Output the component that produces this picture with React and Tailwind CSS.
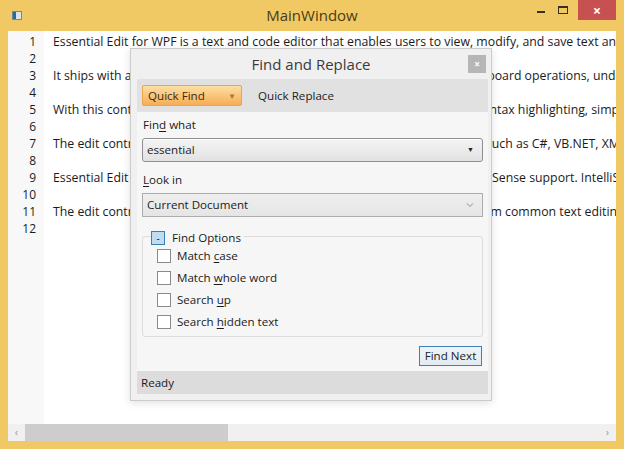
import React from 'react';

const lines = [
  'Essential Edit for WPF is a text and code editor that enables users to view, modify, and save text and code files.',
  '',
  'It ships with a rich set of editing features, including the find and replace, clipboard operations, undo and redo.',
  '',
  'With this control, users can easily view and edit all text and code files with syntax highlighting, simple editing.',
  '',
  'The edit control provides syntax highlighting for several popular languages, such as C#, VB.NET, XML, SQL and Java.',
  '',
  'Essential Edit for WPF also comes with built-in and totally customizable IntelliSense support. IntelliSense lists items.',
  '',
  'The edit control also offers keyboard shortcuts that allow the users to perform common text editing operations.',
  '',
];

function Key({ children }) {
  return <span className="underline underline-offset-2">{children}</span>;
}

function CheckRow({ children }) {
  return (
    <div className="flex h-[22px] items-center gap-[6px]">
      <div className="h-[14px] w-[14px] border border-[#8a8a8a] bg-white" />
      <span>{children}</span>
    </div>
  );
}

function FindDialog() {
  return (
    <div className="absolute left-[122px] top-[17px] flex h-[353px] w-[362px] flex-col border border-[#cbcbcb] bg-[#f0f0f0] text-[11.6px] shadow-[0_2px_8px_rgba(0,0,0,0.12)]">
      <div className="relative flex h-[30px] items-center justify-center text-[15px] text-[#3b3b3b]">
        Find and Replace
        <div className="absolute right-[5px] top-[6px] flex h-[18px] w-[18px] items-center justify-center bg-[#b6b6b6] text-[10px] font-bold text-white">
          ×
        </div>
      </div>
      <div className="flex flex-1 flex-col pb-[6px] pl-[6px] pr-[3px]">
        <div className="flex h-[33px] items-center gap-[16px] bg-[#e1e1e1] pl-[5px]">
          <div className="flex h-[21px] w-[100px] items-center justify-between rounded-[2px] border border-[#e9a64b] bg-[linear-gradient(#fddfa3,#f6ad55)] px-[5px] text-[#3a2b12]">
            <span>Quick Find</span>
            <span className="text-[8px] text-[#a07a4a]">▼</span>
          </div>
          <span className="text-[#222]">Quick Replace</span>
        </div>
        <div className="flex flex-1 flex-col bg-[#f6f6f6] px-[5px] pt-[4px]">
          <div className="flex h-[18px] items-center pl-[1px]">
            Fin<Key>d</Key>&nbsp;what
          </div>
          <div className="mt-[4px] flex h-[24px] items-center justify-between rounded-[3px] border border-[#8f8f8f] bg-[linear-gradient(#f4f4f4,#e2e2e2)] pl-[4px] pr-[8px] shadow-[inset_0_1px_0_#ffffff]">
            <span>essential</span>
            <span className="text-[7px] text-[#222]">▼</span>
          </div>
          <div className="mt-[9px] flex h-[18px] items-center pl-[1px]">
            <Key>L</Key>ook in
          </div>
          <div className="mt-[4px] flex h-[24px] items-center justify-between border border-[#acacac] bg-[linear-gradient(#efefef,#e5e5e5)] pl-[4px] pr-[8px]">
            <span>Current Document</span>
            <svg width="8" height="6" viewBox="0 0 8 6">
              <path d="M1 1.5 L4 4.5 L7 1.5" fill="none" stroke="#8a8a8a" strokeWidth="1" />
            </svg>
          </div>
          <div className="relative mt-[19px] h-[101px] rounded-[3px] border border-[#dcdcdc] pl-[14px] pt-[8px]">
            <div className="absolute -top-[8px] left-[8px] flex items-center gap-[7px] bg-[#f6f6f6] pr-[3px]">
              <div className="flex h-[14px] w-[14px] items-center justify-center border border-[#3c7fb1] bg-[#bfdcf3] text-[10px] leading-none text-[#222]">
                -
              </div>
              <span>Find Options</span>
            </div>
            <CheckRow>
              Match <Key>c</Key>ase
            </CheckRow>
            <CheckRow>
              Match <Key>w</Key>hole word
            </CheckRow>
            <CheckRow>
              Search <Key>u</Key>p
            </CheckRow>
            <CheckRow>
              Search <Key>h</Key>idden text
            </CheckRow>
          </div>
          <div className="mt-[9px] flex justify-end pr-[1px]">
            <div className="flex h-[20px] w-[63px] items-center justify-center border border-[#3c7fb1] bg-[linear-gradient(#eef4f9,#e3ebf2)] text-[#222]">
              Find Next
            </div>
          </div>
        </div>
        <div className="flex h-[23px] items-center bg-[#dcdcdc] pl-[4px]">Ready</div>
      </div>
    </div>
  );
}

export default function App() {
  return (
    <div className="flex h-[449px] w-[624px] flex-col overflow-hidden bg-[#f1c964] font-['Open_Sans',sans-serif] text-[12px] text-[#1b1b1b]">
      <div className="relative flex h-[31px] items-center justify-center">
        <div className="absolute left-[12px] top-[11px] h-[9px] w-[10px] border border-[#6c8ba0] bg-[linear-gradient(90deg,#2f6a8a_40%,#d7e6ee_40%)]" />
        <span className="text-[15px] text-[#4a3c14]">MainWindow</span>
        <div className="absolute right-[8px] top-0 flex items-start">
          <div className="flex h-[20px] w-[22px] items-center justify-center">
            <div className="mt-[4px] h-[2px] w-[8px] bg-[#3a3020]" />
          </div>
          <div className="flex h-[20px] w-[22px] items-center justify-center">
            <div className="h-[8px] w-[10px] border border-t-2 border-[#3a3020]" />
          </div>
          <div className="ml-[4px] flex h-[20px] w-[38px] items-center justify-center bg-[#c75050] text-[14px] font-bold text-white">
            ×
          </div>
        </div>
      </div>
      <div className="flex flex-1 flex-col px-[8px]">
        <div className="relative flex flex-1 flex-col bg-white">
          <div className="flex flex-1 overflow-hidden">
            <div className="w-[36px] shrink-0 bg-[#f8f8f8] pr-[8px] pt-[2px] text-right">
              {lines.map((_, i) => (
                <div key={i} className="h-[17px] leading-[17px]">
                  {i + 1}
                </div>
              ))}
            </div>
            <div className="flex-1 overflow-hidden pl-[9px] pt-[2px] text-[12.3px]">
              {lines.map((l, i) => (
                <div key={i} className="h-[17px] whitespace-nowrap leading-[17px]">
                  {l}
                </div>
              ))}
            </div>
          </div>
          <div className="flex h-[17px] items-center bg-[#f0f0f0]">
            <span className="w-[17px] text-center text-[11px] text-[#9a9a9a]">‹</span>
            <div className="h-full w-[203px] bg-[#cdcdcd]" />
            <div className="flex-1" />
            <span className="w-[17px] text-center text-[11px] text-[#9a9a9a]">›</span>
          </div>
          <FindDialog />
        </div>
      </div>
      <div className="h-[8px]" />
    </div>
  );
}
